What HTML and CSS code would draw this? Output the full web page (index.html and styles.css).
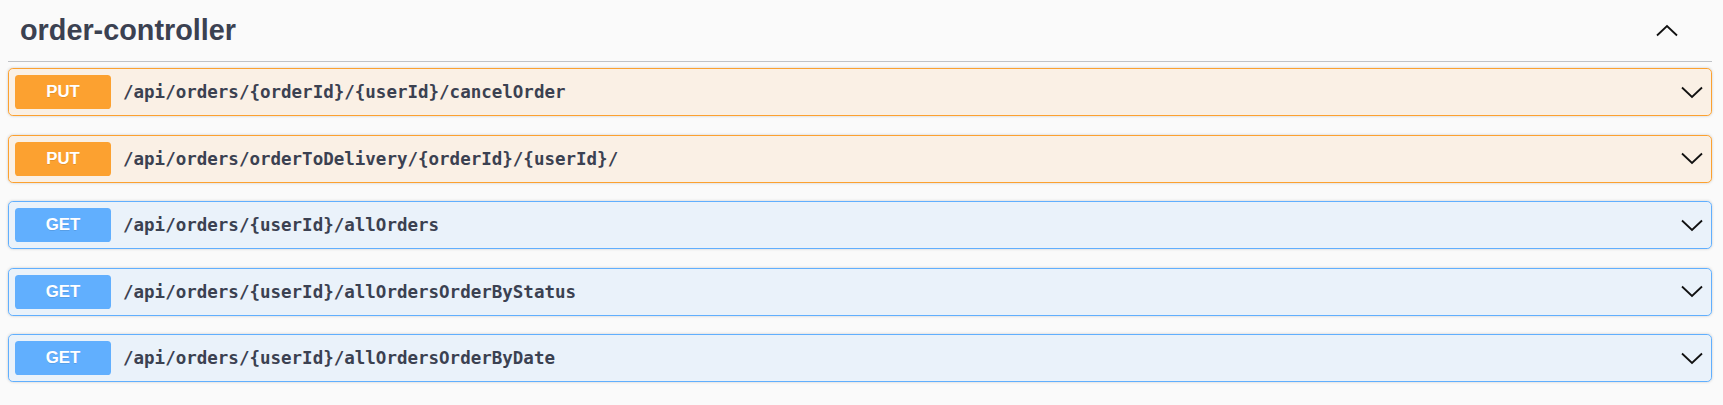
FILE: index.html
```html
<!DOCTYPE html>
<html lang="en">
<head>
<meta charset="utf-8">
<title>order-controller</title>
<link rel="stylesheet" href="styles.css">
</head>
<body>
<div class="section">
  <h3 class="tag">
    <span class="tag-name">order-controller</span>
    <button class="tag-toggle" aria-label="Collapse">
      <svg class="chev" width="22" height="13" viewBox="0 0 22 13"><polyline points="1,11.5 11,2 21,11.5"/></svg>
    </button>
  </h3>
  <div class="ops">
    <div class="op op-put">
      <span class="method">PUT</span>
      <span class="path">/api/orders/{orderId}/{userId}/cancelOrder</span>
      <svg class="chev" width="22" height="13" viewBox="0 0 22 13"><polyline points="1,1.5 11,11 21,1.5"/></svg>
    </div>
    <div class="op op-put">
      <span class="method">PUT</span>
      <span class="path">/api/orders/orderToDelivery/{orderId}/{userId}/</span>
      <svg class="chev" width="22" height="13" viewBox="0 0 22 13"><polyline points="1,1.5 11,11 21,1.5"/></svg>
    </div>
    <div class="op op-get">
      <span class="method">GET</span>
      <span class="path">/api/orders/{userId}/allOrders</span>
      <svg class="chev" width="22" height="13" viewBox="0 0 22 13"><polyline points="1,1.5 11,11 21,1.5"/></svg>
    </div>
    <div class="op op-get">
      <span class="method">GET</span>
      <span class="path">/api/orders/{userId}/allOrdersOrderByStatus</span>
      <svg class="chev" width="22" height="13" viewBox="0 0 22 13"><polyline points="1,1.5 11,11 21,1.5"/></svg>
    </div>
    <div class="op op-get">
      <span class="method">GET</span>
      <span class="path">/api/orders/{userId}/allOrdersOrderByDate</span>
      <svg class="chev" width="22" height="13" viewBox="0 0 22 13"><polyline points="1,1.5 11,11 21,1.5"/></svg>
    </div>
  </div>
</div>
</body>
</html>
```

FILE: styles.css
```css
html, body {
  margin: 0;
  background: #fafafa;
  font-family: "Liberation Sans", Arial, sans-serif;
}

.section {
  padding: 0 11px 0 8px;
}

.tag {
  display: flex;
  align-items: center;
  box-sizing: border-box;
  height: 62px;
  margin: 0 0 6px;
  padding: 0 34px 0 12px;
  border-bottom: 1px solid rgba(59, 65, 81, 0.3);
  font-size: 28.8px;
  font-weight: 700;
  color: #3b4151;
}

.tag-name {
  flex: 1;
}

.tag-toggle {
  display: flex;
  align-items: center;
  padding: 0;
  margin: 0;
  border: none;
  background: none;
}

.chev {
  display: block;
  flex: none;
}

.chev polyline {
  fill: none;
  stroke: #111;
  stroke-width: 1.8;
}

.op {
  display: flex;
  align-items: center;
  box-sizing: border-box;
  height: 48px;
  margin-bottom: 18.5px;
  padding: 0 8px 0 6px;
  border: 1px solid;
  border-radius: 4.8px;
  box-shadow: 0 0 3px rgba(0, 0, 0, 0.19);
}

.op-put {
  background: rgba(252, 161, 48, 0.1);
  border-color: #fca130;
}

.op-get {
  background: rgba(97, 175, 254, 0.1);
  border-color: #61affe;
}

.method {
  display: flex;
  align-items: center;
  justify-content: center;
  flex: none;
  width: 96px;
  height: 34px;
  border-radius: 3.6px;
  color: #fff;
  font-size: 16.8px;
  font-weight: 700;
  text-shadow: 0 1px 0 rgba(0, 0, 0, 0.1);
}

.op-put .method {
  background: #fca130;
}

.op-get .method {
  background: #61affe;
}

.path {
  flex: 1;
  padding: 0 12px;
  font-family: "DejaVu Sans Mono", "Liberation Mono", monospace;
  font-size: 17.5px;
  font-weight: 700;
  color: #3b4151;
}
```
